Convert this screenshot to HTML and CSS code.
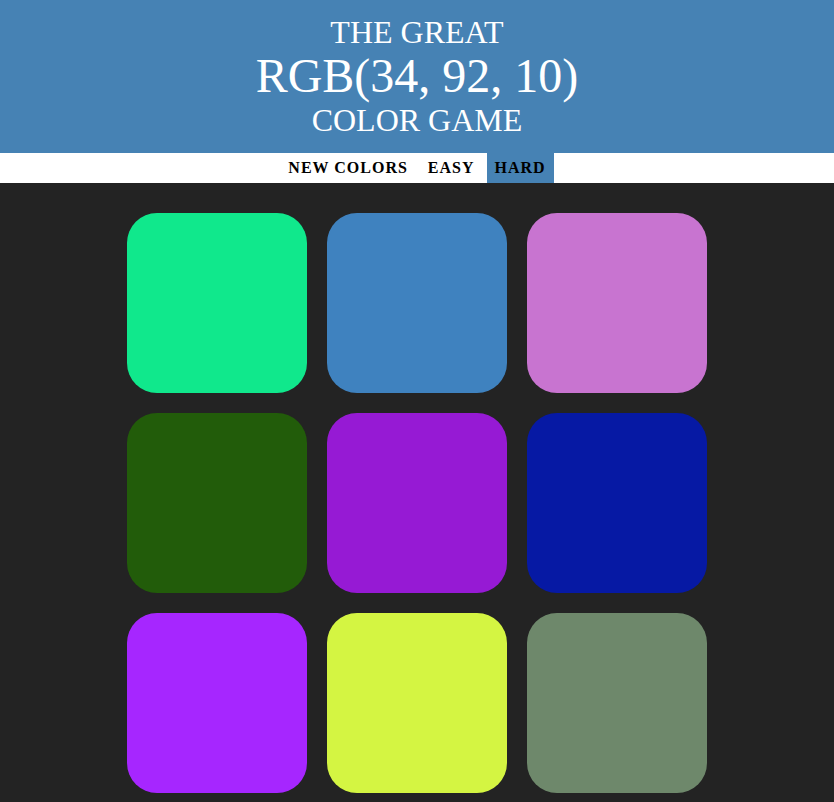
FILE: index.html
```html
<!DOCTYPE html>
<html>
<head>
<meta charset="utf-8">
<title>Color Game</title>
<link rel="stylesheet" href="styles.css">
</head>
<body>
<h1 class="title">The Great<br><span class="color-display">RGB(34, 92, 10)</span><br>Color Game</h1>
<div class="stripe">
  <button class="btn">New Colors</button>
  <span class="message"></span>
  <button class="btn">Easy</button>
  <button class="btn selected">Hard</button>
</div>
<div class="container">
  <div class="square" style="background: rgb(16, 232, 140);"></div>
  <div class="square" style="background: rgb(63, 130, 191);"></div>
  <div class="square" style="background: rgb(200, 116, 208);"></div>
  <div class="square" style="background: rgb(34, 92, 10);"></div>
  <div class="square" style="background: rgb(150, 26, 212);"></div>
  <div class="square" style="background: rgb(6, 25, 164);"></div>
  <div class="square" style="background: rgb(166, 38, 255);"></div>
  <div class="square" style="background: rgb(212, 245, 66);"></div>
  <div class="square" style="background: rgb(110, 136, 107);"></div>
</div>
</body>
</html>
```
FILE: styles.css
```css
body {
  margin: 0;
  background: #232323;
  font-family: "Liberation Serif", "Times New Roman", serif;
}

.title {
  margin: 0;
  padding: 15px 0;
  background: steelblue;
  color: #fff;
  text-align: center;
  text-transform: uppercase;
  font-weight: normal;
  font-size: 32px;
  line-height: 1.1;
}

.color-display {
  font-size: 150%;
}

.stripe {
  height: 30px;
  background: #fff;
  text-align: center;
  font-size: 16px;
}

.btn {
  border: none;
  background: none;
  height: 100%;
  padding: 0 8px;
  margin: 0;
  font-family: "Liberation Serif", "Times New Roman", serif;
  font-size: 16px;
  font-weight: 700;
  letter-spacing: 1px;
  text-transform: uppercase;
  color: #000;
  vertical-align: top;
}

.btn.selected {
  background: steelblue;
}

.container {
  max-width: 600px;
  margin: 20px auto;
  display: flex;
  flex-wrap: wrap;
}

.square {
  width: 180px;
  height: 180px;
  margin: 10px;
  border-radius: 30px;
}
```
